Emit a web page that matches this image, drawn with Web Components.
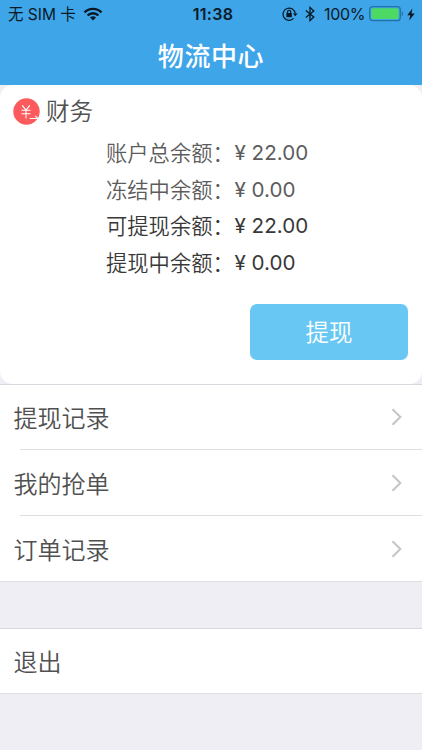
<!DOCTYPE html>
<html lang="zh-CN">
<head>
<meta charset="utf-8">
<meta name="viewport" content="width=device-width, initial-scale=1">
<title>物流中心</title>
<style>
    html, body {
        margin: 0;
        height: 100%;
    }

    body {
        background: #efeef5;
        color: #505050;
        font-family: Inter, "Noto Sans CJK SC", sans-serif;
        overflow: hidden;
    }
</style>
</head>
<body>

<template id="statusBar">
    <style>
        :host {
            display: grid;
            grid-template-columns: 1fr auto 1fr;
            align-items: center;
            height: 28px;
            padding: 0 7px 0 8px;
            background: #3ea5e9;
            color: #0b1a26;
            font-size: 16px;
            line-height: 28px;
        }

        .side {
            display: flex;
            align-items: center;
        }

        .carrier {
            font-size: 15.5px;
            line-height: 26px;
            padding-top: 2px;
            margin-right: 7px;
        }

        .time {
            font-weight: 600;
            font-size: 16px;
            letter-spacing: 0.3px;
            margin-left: 3px;
        }

        .right {
            justify-content: flex-end;
        }

        .lock { margin-right: 7px; }
        .bluetooth { margin-right: 9px; }
        .percent {
            margin-right: 4px;
            letter-spacing: -0.35px;
        }
        .battery { margin-right: 3px; }
        svg { display: block; flex: none; }
    </style>

    <div class="side">
        <span class="carrier"><slot name="carrier"></slot></span>
        <svg width="20" height="14" viewBox="0 0 20 14" fill="none" stroke="#081722" stroke-width="2.4">
            <path d="M1.5 5.4a12 12 0 0 1 17 0"/>
            <path d="M4.6 8.5a7.6 7.6 0 0 1 10.8 0"/>
            <path d="M10 13.5 7 10.6a4.3 4.3 0 0 1 6 0z" fill="#081722" stroke="none"/>
        </svg>
    </div>
    <span class="time"><slot name="time"></slot></span>
    <div class="side right">
        <svg class="lock" width="16" height="14" viewBox="0 0 16 14" fill="none" stroke="#081722" stroke-width="1.2">
            <path d="M11.6 11.4A6.1 6.1 0 1 1 13.2 6.6"/>
            <path d="M11 6.4h4.6l-2.3 2.9z" fill="#081722" stroke="none"/>
            <path d="M5.5 6.3V5a1.6 1.6 0 0 1 3.2 0v1.3"/>
            <path d="M4.4 6h5.4v4.2H4.4z" fill="#081722" stroke="none"/>
        </svg>
        <svg class="bluetooth" width="10" height="16" viewBox="0 0 10 16" fill="none" stroke="#081722" stroke-width="1.3">
            <path d="M.8 4.4 8.8 11 5 14.6V1.4L8.8 5 .8 11.6"/>
        </svg>
        <span class="percent"><slot name="battery"></slot></span>
        <svg class="battery" width="35" height="16" viewBox="0 0 35 16">
            <rect x=".7" y=".7" width="30.6" height="14" rx="3" fill="none" stroke="#2472a8" stroke-width="1.3"/>
            <rect x="2.3" y="2.3" width="27.4" height="10.8" rx="1.4" fill="#4cd964"/>
            <path d="M32.6 5.2c2 .6 2 4.4 0 5z" fill="#2472a8"/>
        </svg>
        <svg width="8" height="13" viewBox="0 0 8 13">
            <path d="M5.4.4.3 7.2h3L2.2 12.5 7.7 5.4H4.5z" fill="#081722"/>
        </svg>
    </div>
</template>

<template id="navBar">
    <style>
        :host {
            display: flex;
            justify-content: center;
            height: 57px;
            background: #3ea5e9;
            color: #fff;
            font-size: 26px;
            font-weight: 500;
            line-height: 57px;
            letter-spacing: 0.6px;
        }
    </style>
    <slot></slot>
</template>

<template id="financeCard">
    <style>
        :host {
            display: flex;
            flex-direction: column;
            box-sizing: border-box;
            height: 299px;
            padding: 8px 14px 24px 13px;
            border-radius: 13px;
            background: #fff;
        }

        header {
            display: flex;
            align-items: center;
            height: 37px;
            gap: 6px;
            font-size: 23.5px;
            font-weight: 350;
            line-height: 38px;
        }

        svg { display: block; }

        .rows {
            margin: 5px 0 0 93px;
        }

        .action {
            margin-top: auto;
            align-self: flex-end;
        }
    </style>
    <header>
        <svg width="27" height="27" viewBox="0 0 27 27" fill="none" stroke="#fff" stroke-width="1.1">
            <circle cx="13.5" cy="13.5" r="13.2" fill="#fc5a5c" stroke="none"/>
            <path d="M9.2 7.3l3.8 4.9 3.8-4.9M8.5 12.3h9M8.5 15.7h9M13 12.2v8.2M16.7 20.5h8.2l-2.7-2.6"/>
        </svg>
        <slot name="title"></slot>
    </header>
    <div class="rows"><slot></slot></div>
    <div class="action"><slot name="action"></slot></div>
</template>

<template id="balanceRow">
    <style>
        :host {
            display: flex;
            height: 36.6px;
            color: #5c5c5c;
            font-size: 21.3px;
            font-weight: 350;
            line-height: 36.6px;
            white-space: nowrap;
        }

        :host([active]) {
            color: #383838;
        }

        .label {
            width: 128.5px;
        }

        .amount {
            font-size: 20.6px;
            font-weight: 400;
        }
    </style>
    <span class="label"><slot></slot></span>
    <span class="amount"><slot name="amount"></slot></span>
</template>

<template id="actionButton">
    <style>
        :host {
            display: block;
        }

        button {
            display: block;
            width: 158px;
            height: 56px;
            padding: 0;
            border: 0;
            border-radius: 7px;
            background: #69c8f3;
            color: #fff;
            font: inherit;
            font-size: 23.5px;
            font-weight: 350;
            line-height: 57px;
        }
    </style>
    <button type="button"><slot></slot></button>
</template>

<template id="menuList">
    <style>
        :host {
            display: block;
            background: #fff;
            border-top: 1px solid #d9d8de;
            border-bottom: 1px solid #dddce2;
        }

        :host([spaced]) {
            margin-top: 46px;
        }
    </style>
    <slot></slot>
</template>

<template id="menuItem">
    <style>
        :host {
            display: block;
            --line-color: #dedee1;
        }

        .row {
            display: flex;
            align-items: center;
            justify-content: space-between;
            height: 64px;
            padding: 0 19.5px 0 13.5px;
            font-size: 24px;
            font-weight: 350;
            line-height: 64px;
        }

        .text {
            padding-top: 3px;
        }

        .line {
            height: 1px;
            margin: 0 0 1px 20px;
            background: var(--line-color);
        }

        :host(:last-of-type) .line { display: none; }
        :host([plain]) svg { display: none; }
    </style>
    <div class="row">
        <span class="text"><slot></slot></span>
        <svg width="12" height="18" viewBox="0 0 12 18" fill="none" stroke="#c4c4c9" stroke-width="2">
            <path d="M1.5 1.2 9.4 9l-7.9 7.8"/>
        </svg>
    </div>
    <div class="line"></div>
</template>

<status-bar>
    <span slot="carrier">无 SIM 卡</span>
    <span slot="time">11:38</span>
    <span slot="battery">100%</span>
</status-bar>
<nav-bar>物流中心</nav-bar>
<finance-card>
    <span slot="title">财务</span>
    <balance-row>账户总余额：<span slot="amount">¥ 22.00</span></balance-row>
    <balance-row>冻结中余额：<span slot="amount">¥ 0.00</span></balance-row>
    <balance-row active>可提现余额：<span slot="amount">¥ 22.00</span></balance-row>
    <balance-row active>提现中余额：<span slot="amount">¥ 0.00</span></balance-row>
    <action-button slot="action">提现</action-button>
</finance-card>
<menu-list>
    <menu-item>提现记录</menu-item>
    <menu-item>我的抢单</menu-item>
    <menu-item>订单记录</menu-item>
</menu-list>
<menu-list spaced>
    <menu-item plain>退出</menu-item>
</menu-list>

<script>
    (function logisticsComponents(customElements) {

        'use strict';

        class TemplateElement extends HTMLElement {

            constructor() {
                super();
                const shadowRoot = this.attachShadow({ mode: 'open' });
                const template = document.querySelector(this.constructor.template);
                shadowRoot.appendChild(document.importNode(template.content, true));
            }

        }

        class StatusBar extends TemplateElement {
            static get template() { return '#statusBar'; }
        }

        class NavBar extends TemplateElement {
            static get template() { return '#navBar'; }
        }

        class FinanceCard extends TemplateElement {
            static get template() { return '#financeCard'; }
        }

        class BalanceRow extends TemplateElement {
            static get template() { return '#balanceRow'; }
        }

        class ActionButton extends TemplateElement {
            static get template() { return '#actionButton'; }
        }

        class MenuList extends TemplateElement {
            static get template() { return '#menuList'; }
        }

        class MenuItem extends TemplateElement {
            static get template() { return '#menuItem'; }
        }

        customElements.define('status-bar', StatusBar);
        customElements.define('nav-bar', NavBar);
        customElements.define('finance-card', FinanceCard);
        customElements.define('balance-row', BalanceRow);
        customElements.define('action-button', ActionButton);
        customElements.define('menu-list', MenuList);
        customElements.define('menu-item', MenuItem);

    })(window.customElements);
</script>
</body>
</html>
